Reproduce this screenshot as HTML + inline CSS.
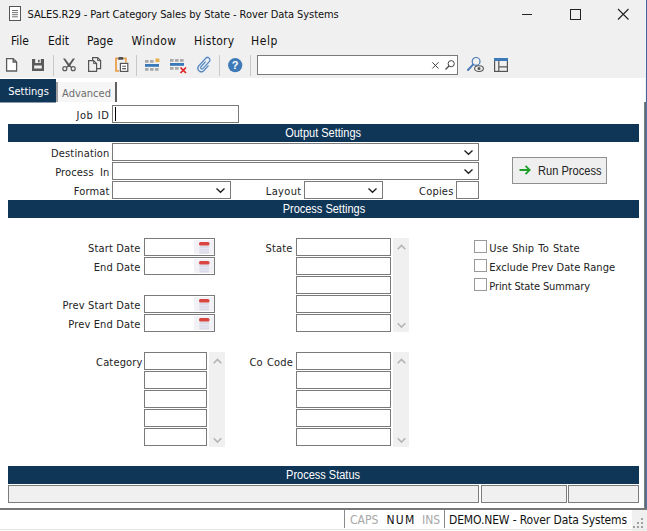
<!DOCTYPE html>
<html><head><meta charset="utf-8">
<title>SALES.R29 - Part Category Sales by State</title>
<style>
html,body{margin:0;padding:0;}
body{width:647px;height:531px;overflow:hidden;position:relative;background:#fff;font-family:"Liberation Sans",sans-serif;color:#222;}
.abs{position:absolute;}
svg{position:absolute;overflow:visible;}
.ui{font-family:"DejaVu Sans Condensed","DejaVu Sans","Liberation Sans",sans-serif;}
#chrome{left:0;top:0;width:647px;height:78px;background:#f0f0f0;}
#title{left:27.5px;top:7px;font-size:11px;line-height:16px;color:#111;white-space:nowrap;letter-spacing:-0.08px;}
.menu{top:33px;font-size:12px;line-height:16px;color:#111;white-space:nowrap;}
.bar{left:8px;width:631px;height:18px;background:#0f3557;color:#fff;font-size:12.5px;text-align:center;line-height:19px;white-space:nowrap;}
.bar span{display:inline-block;transform:scaleX(0.88);}
.lbl{font-family:"DejaVu Sans Condensed","DejaVu Sans","Liberation Sans",sans-serif;font-size:11px;line-height:18px;height:18px;color:#222;white-space:nowrap;text-align:right;letter-spacing:0.15px;margin-top:1px;margin-left:0.5px;}
.inp{box-sizing:border-box;border:1px solid #7a7a7a;background:#fff;height:18px;}
.sb{background:#f0f0f0;width:16px;}
.chk{box-sizing:border-box;width:13px;height:13px;border:1px solid #9a9a9a;background:#fff;}
.cl{font-family:"DejaVu Sans Condensed","DejaVu Sans","Liberation Sans",sans-serif;font-size:11px;line-height:14px;color:#222;white-space:nowrap;left:489.3px;margin-top:1px;}
.sbox{box-sizing:border-box;border:1px solid #7c7c7c;background:#f0f0f0;height:18px;top:485px;}
.sep{width:1px;background:#c9c9c9;top:55px;height:21px;}
.st{top:511px;font-size:12px;line-height:18px;white-space:nowrap;}
</style></head><body>
<div id="chrome" class="abs"></div>

<!-- title bar -->
<svg style="left:9px;top:6px" width="13" height="16" viewBox="0 0 13 16"><rect x="0.5" y="0.5" width="11" height="14" fill="#fff" stroke="#555" stroke-width="1"/><path d="M3 4.5h6M3 6.6h6M3 8.7h6M3 10.8h6" stroke="#666" stroke-width="0.9" fill="none"/></svg>
<div id="title" class="abs ui">SALES.R29 - Part Category Sales by State - Rover Data Systems</div>
<svg style="left:521px;top:8px" width="110" height="13" viewBox="0 0 110 13"><path d="M1 6.5h10" stroke="#222" stroke-width="1" fill="none"/><rect x="49.5" y="1.5" width="10" height="10" fill="none" stroke="#222" stroke-width="1"/><path d="M97 1l10.5 10.5M107.5 1L97 11.5" stroke="#222" stroke-width="1.1" fill="none"/></svg>

<!-- menu -->
<div class="abs menu ui" style="left:11px">File</div>
<div class="abs menu ui" style="left:48px">Edit</div>
<div class="abs menu ui" style="left:87px">Page</div>
<div class="abs menu ui" style="left:131.5px;letter-spacing:0.4px">Window</div>
<div class="abs menu ui" style="left:194px;letter-spacing:0.3px">History</div>
<div class="abs menu ui" style="left:251px;letter-spacing:0.6px">Help</div>

<!-- toolbar -->
<svg style="left:6px;top:58px" width="12" height="14" viewBox="0 0 12 14"><path d="M0.6 0.6h6.6l3.4 3.4v9H0.6z" fill="#fff" stroke="#5c5c5c" stroke-width="1.3"/><path d="M7.2 0.6v3.4h3.4" fill="none" stroke="#5c5c5c" stroke-width="1.400"/></svg>
<svg style="left:32px;top:59px" width="12" height="12" viewBox="0 0 12 12"><rect x="0" y="0" width="12" height="12" fill="#5a5a5a"/><rect x="3.2" y="0" width="5.6" height="4" fill="#f0f0f0"/><rect x="6" y="0.8" width="1.6" height="2.6" fill="#5a5a5a"/><rect x="2.2" y="6.5" width="7.6" height="3" fill="#f0f0f0"/></svg>
<div class="abs sep" style="left:53px"></div>
<svg style="left:62px;top:58px" width="14" height="14" viewBox="0 0 14 14"><path d="M1 0.400L3.100 0.600 8.300 7.600 10 9 9 9.800 6.200 8.200z" fill="#5a5a5a"/><path d="M13 0.400L10.900 0.600 5.700 7.600 4 9 5 9.800 7.800 8.200z" fill="#5a5a5a"/><circle cx="2.800" cy="10.700" r="2" fill="none" stroke="#5a5a5a" stroke-width="1.200"/><circle cx="11.200" cy="10.700" r="2" fill="none" stroke="#5a5a5a" stroke-width="1.200"/></svg>
<svg style="left:88px;top:57px" width="14" height="15" viewBox="0 0 14 15"><path d="M4.6 0.6h5l3 3v8h-8z" fill="#f0f0f0" stroke="#555" stroke-width="1.2"/><path d="M9.6 0.6v3h3" fill="none" stroke="#555" stroke-width="1"/><path d="M0.6 3.6h5l3 3v7.8h-8z" fill="#f0f0f0" stroke="#555" stroke-width="1.2"/><path d="M5.6 3.6v3h3" fill="none" stroke="#555" stroke-width="1"/></svg>
<svg style="left:114px;top:57px" width="15" height="15" viewBox="0 0 15 15"><path d="M4.300 1.400H2V13.800H5" fill="none" stroke="#e8a04c" stroke-width="1.800"/><path d="M9.500 1.400H11.900V5.600" fill="none" stroke="#e8a04c" stroke-width="1.600"/><path d="M4.200 2.700V1.400c0-0.900 0.600-1.400 1.400-1.400h2.400c0.800 0 1.400 0.500 1.400 1.400V2.700z" fill="#505050"/><rect x="6.400" y="6.400" width="7.400" height="8" fill="#fff" stroke="#555" stroke-width="1.200"/><path d="M8.200 9.300h3.800M8.200 11.600h3.800" stroke="#555" stroke-width="1.100" fill="none"/></svg>
<div class="abs sep" style="left:136px"></div>
<svg style="left:145px;top:58px" width="15" height="13" viewBox="0 0 15 13"><rect x="0" y="2" width="3.600" height="2.800" fill="#aaa"/><rect x="5" y="2" width="3.600" height="2.800" fill="#aaa"/><rect x="10.400" y="0.500" width="4" height="3.600" fill="#e8b04c"/><rect x="0" y="6" width="14" height="2.800" fill="#3a78b8"/><rect x="0" y="10" width="3.600" height="2.800" fill="#aaa"/><rect x="5" y="10" width="3.600" height="2.800" fill="#aaa"/><rect x="10" y="10" width="3.600" height="2.800" fill="#aaa"/></svg>
<svg style="left:170px;top:58px" width="17" height="15" viewBox="0 0 17 15"><rect x="0" y="1" width="3.600" height="2.800" fill="#aaa"/><rect x="5" y="1" width="3.600" height="2.800" fill="#aaa"/><rect x="10" y="1" width="3.600" height="2.800" fill="#aaa"/><rect x="0" y="5" width="14" height="2.800" fill="#3a78b8"/><rect x="0" y="9" width="3.600" height="2.800" fill="#aaa"/><rect x="5" y="9" width="3.600" height="2.800" fill="#aaa"/><path d="M10.500 9.500l5.500 5.500M16 9.500l-5.500 5.500" stroke="#e02020" stroke-width="1.700" fill="none"/></svg>
<svg style="left:0;top:0" width="647" height="80" viewBox="0 0 647 80"><g transform="translate(204.600 64.600) rotate(42) scale(0.98)" fill="none" stroke-linecap="round"><path d="M3.500 -1.500V5A3.500 3.500 0 0 1 -3.500 5V-5.500A2.500 2.500 0 0 1 1.500 -5.500V4A1.400 1.400 0 0 1 -1.300 4V-2.500" stroke="#d3e4f6" stroke-width="2.400"/><path d="M3.500 -1.500V5A3.500 3.500 0 0 1 -3.500 5V-5.500A2.500 2.500 0 0 1 1.500 -5.500V4A1.400 1.400 0 0 1 -1.300 4V-2.500" stroke="#4f7db3" stroke-width="1.050"/></g></svg>
<div class="abs sep" style="left:219px"></div>
<svg style="left:228px;top:57.600px" width="14.400" height="14.400" viewBox="0 0 14.400 14.400"><circle cx="7.200" cy="7.200" r="7.100" fill="#3f7ab8"/><text x="7.200" y="11.200" font-family="Liberation Sans, sans-serif" font-weight="bold" font-size="11" fill="#fff" text-anchor="middle">?</text></svg>
<div class="abs sep" style="left:250px"></div>
<div class="abs" style="left:257px;top:55px;width:201px;height:20px;box-sizing:border-box;border:1px solid #7a7a7a;background:#fff"></div>
<svg style="left:432px;top:62px" width="7" height="7" viewBox="0 0 7 7"><path d="M0.300 0.300l6.200 6.200M6.500 0.300L0.300 6.500" stroke="#444" stroke-width="1" fill="none"/></svg>
<svg style="left:445px;top:60px" width="10" height="10" viewBox="0 0 10 10"><circle cx="6.200" cy="3.700" r="3.100" fill="none" stroke="#444" stroke-width="1"/><path d="M4 6L0.500 9.500" stroke="#444" stroke-width="1.300" fill="none"/></svg>
<svg style="left:467px;top:57px" width="17" height="15" viewBox="0 0 17 15"><circle cx="9.100" cy="4.400" r="3.900" fill="#f0f0f0" stroke="#4a7ab5" stroke-width="1.200"/><path d="M6 7.600L1 13" stroke="#4a7ab5" stroke-width="2" fill="none" stroke-linecap="round"/><ellipse cx="12" cy="11.600" rx="4.400" ry="2.900" fill="#f0f0f0" stroke="#555" stroke-width="1.100"/><circle cx="12" cy="11.600" r="1.500" fill="#555"/></svg>
<svg style="left:494px;top:58px" width="14" height="14" viewBox="0 0 14 14"><rect x="0.600" y="0.600" width="12.800" height="12.800" fill="#f0f0f0" stroke="#555" stroke-width="1.200"/><rect x="0" y="0" width="14" height="3" fill="#3f7ab8"/><path d="M4.800 3v10.500M4.800 8.800h8.600" stroke="#555" stroke-width="1.200" fill="none"/></svg>

<!-- tabs -->
<div class="abs ui" style="left:0;top:79px;width:55px;padding-left:1px;height:23px;border-bottom:1px solid #8a9bad;background:#0f3557;color:#fff;font-size:11px;line-height:25px;text-align:center;">Settings</div>
<div class="abs ui" style="left:56px;top:82px;width:61px;height:20px;background:#f6f6f6;color:#6d6d6d;font-size:11px;line-height:23px;text-align:center;border-left:2px solid #a0a0a0;border-right:2px solid #606060;box-sizing:border-box">Advanced</div>

<div class="abs lbl" style="left:0;width:109px;top:106px;letter-spacing:0.6px;word-spacing:0.5px">Job ID</div>
<div class="abs inp" style="left:112px;top:105px;width:127px;height:18px"></div>
<div class="abs" style="left:115px;top:107px;width:1px;height:14px;background:#000"></div>

<div class="abs bar" style="top:124px"><span>Output Settings</span></div>
<div class="abs lbl" style="left:0;width:109px;top:144px">Destination</div>
<div class="abs inp" style="left:112px;top:143px;width:367px"></div>
<div class="abs lbl" style="left:0;width:109px;top:163px;word-spacing:3px">Process In</div>
<div class="abs inp" style="left:112px;top:162px;width:367px"></div>
<div class="abs lbl" style="left:0;width:109px;top:182px">Format</div>
<div class="abs inp" style="left:112px;top:181px;width:119px"></div>
<div class="abs lbl" style="left:200px;width:101px;top:182px;letter-spacing:0.35px">Layout</div>
<div class="abs inp" style="left:304px;top:181px;width:79px"></div>
<div class="abs lbl" style="left:352px;width:101px;top:182px;letter-spacing:0.2px">Copies</div>
<div class="abs inp" style="left:456px;top:181px;width:23px"></div>
<svg style="left:464px;top:150px" width="9" height="5" viewBox="0 0 9 5"><path d="M0.500 0.500l4 3.800 4-3.800" fill="none" stroke="#222" stroke-width="1.400"/></svg>
<svg style="left:464px;top:169px" width="9" height="5" viewBox="0 0 9 5"><path d="M0.500 0.500l4 3.800 4-3.800" fill="none" stroke="#222" stroke-width="1.400"/></svg>
<svg style="left:216px;top:188px" width="9" height="5" viewBox="0 0 9 5"><path d="M0.500 0.500l4 3.800 4-3.800" fill="none" stroke="#222" stroke-width="1.400"/></svg>
<svg style="left:368px;top:188px" width="9" height="5" viewBox="0 0 9 5"><path d="M0.500 0.500l4 3.800 4-3.800" fill="none" stroke="#222" stroke-width="1.400"/></svg>

<div class="abs" style="left:512px;top:157px;width:95px;height:27px;box-sizing:border-box;border:1px solid #8f8f8f;background:#efefef;font-size:12px;line-height:25px;white-space:nowrap"><span style="position:absolute;left:25px;top:1px;display:inline-block;transform:scaleX(0.925);transform-origin:0 50%">Run Process</span></div>
<svg style="left:519px;top:165px" width="12" height="10" viewBox="0 0 12 10"><path d="M0.500 5h10M6.500 0.800l4.200 4.200-4.200 4.200" fill="none" stroke="#1fa02a" stroke-width="1.800"/></svg>

<div class="abs bar" style="top:200px"><span>Process Settings</span></div>

<!-- dates -->
<div class="abs lbl" style="left:30px;width:110px;top:239px">Start Date</div>
<div class="abs lbl" style="left:30px;width:110px;top:258px">End Date</div>
<div class="abs lbl" style="left:30px;width:110px;top:296px">Prev Start Date</div>
<div class="abs lbl" style="left:30px;width:110px;top:315px">Prev End Date</div>
<div class="abs inp" style="left:144px;top:238px;width:71px"></div>
<div class="abs inp" style="left:144px;top:257px;width:71px"></div>
<div class="abs inp" style="left:144px;top:295px;width:71px"></div>
<div class="abs inp" style="left:144px;top:314px;width:71px"></div>
<svg style="left:194px;top:240px" width="20" height="14" viewBox="0 0 20 14" id="cal"><rect x="0" y="0" width="20" height="14" fill="#f1f1f6"/><rect x="5.500" y="5.500" width="9.500" height="8" fill="#dcdce8"/><path d="M5.500 8.500h9.500M5.500 11h9.500" stroke="#eef" stroke-width="0.600"/><rect x="5" y="2" width="10.500" height="3.600" rx="1.500" fill="#d9453f"/></svg>
<svg style="left:194px;top:259px" width="20" height="14" viewBox="0 0 20 14"><rect x="0" y="0" width="20" height="14" fill="#f1f1f6"/><rect x="5.500" y="5.500" width="9.500" height="8" fill="#dcdce8"/><path d="M5.500 8.500h9.500M5.500 11h9.500" stroke="#eef" stroke-width="0.600"/><rect x="5" y="2" width="10.500" height="3.600" rx="1.500" fill="#d9453f"/></svg>
<svg style="left:194px;top:297px" width="20" height="14" viewBox="0 0 20 14"><rect x="0" y="0" width="20" height="14" fill="#f1f1f6"/><rect x="5.500" y="5.500" width="9.500" height="8" fill="#dcdce8"/><path d="M5.500 8.500h9.500M5.500 11h9.500" stroke="#eef" stroke-width="0.600"/><rect x="5" y="2" width="10.500" height="3.600" rx="1.500" fill="#d9453f"/></svg>
<svg style="left:194px;top:316px" width="20" height="14" viewBox="0 0 20 14"><rect x="0" y="0" width="20" height="14" fill="#f1f1f6"/><rect x="5.500" y="5.500" width="9.500" height="8" fill="#dcdce8"/><path d="M5.500 8.500h9.500M5.500 11h9.500" stroke="#eef" stroke-width="0.600"/><rect x="5" y="2" width="10.500" height="3.600" rx="1.500" fill="#d9453f"/></svg>

<!-- state -->
<div class="abs lbl" style="left:192px;width:100px;top:239px">State</div>
<div class="abs inp" style="left:296px;top:238px;width:95px"></div>
<div class="abs inp" style="left:296px;top:257px;width:95px"></div>
<div class="abs inp" style="left:296px;top:276px;width:95px"></div>
<div class="abs inp" style="left:296px;top:295px;width:95px"></div>
<div class="abs inp" style="left:296px;top:314px;width:95px"></div>
<div class="abs sb" style="left:393px;top:238px;height:94px"></div>
<svg style="left:397px;top:244px" width="9" height="6" viewBox="0 0 9 6"><path d="M0.700 5.300l3.800-3.800 3.800 3.800" fill="none" stroke="#b4b4b4" stroke-width="1.600"/></svg>
<svg style="left:397px;top:322px" width="9" height="6" viewBox="0 0 9 6"><path d="M0.700 1.200l3.800 3.800 3.800-3.800" fill="none" stroke="#b4b4b4" stroke-width="1.600"/></svg>

<!-- checkboxes -->
<div class="abs chk" style="left:474px;top:240px"></div>
<div class="abs chk" style="left:474px;top:259px"></div>
<div class="abs chk" style="left:474px;top:278px"></div>
<div class="abs cl" style="top:241px;letter-spacing:0.1px;word-spacing:0.9px">Use Ship To State</div>
<div class="abs cl" style="top:260px;letter-spacing:0.05px">Exclude Prev Date Range</div>
<div class="abs cl" style="top:279px;letter-spacing:-0.13px">Print State Summary</div>

<!-- category -->
<div class="abs lbl" style="left:42px;width:100px;top:353px">Category</div>
<div class="abs inp" style="left:144px;top:352px;width:63px"></div>
<div class="abs inp" style="left:144px;top:371px;width:63px"></div>
<div class="abs inp" style="left:144px;top:390px;width:63px"></div>
<div class="abs inp" style="left:144px;top:409px;width:63px"></div>
<div class="abs inp" style="left:144px;top:428px;width:63px"></div>
<div class="abs sb" style="left:209px;top:352px;height:95px"></div>
<svg style="left:213px;top:358px" width="9" height="6" viewBox="0 0 9 6"><path d="M0.700 5.300l3.800-3.800 3.800 3.800" fill="none" stroke="#b4b4b4" stroke-width="1.600"/></svg>
<svg style="left:213px;top:437px" width="9" height="6" viewBox="0 0 9 6"><path d="M0.700 1.200l3.800 3.800 3.800-3.800" fill="none" stroke="#b4b4b4" stroke-width="1.600"/></svg>

<!-- co code -->
<div class="abs lbl" style="left:192px;width:100.500px;top:353px;word-spacing:1px">Co Code</div>
<div class="abs inp" style="left:296px;top:352px;width:95px"></div>
<div class="abs inp" style="left:296px;top:371px;width:95px"></div>
<div class="abs inp" style="left:296px;top:390px;width:95px"></div>
<div class="abs inp" style="left:296px;top:409px;width:95px"></div>
<div class="abs inp" style="left:296px;top:428px;width:95px"></div>
<div class="abs sb" style="left:393px;top:352px;height:95px"></div>
<svg style="left:397px;top:358px" width="9" height="6" viewBox="0 0 9 6"><path d="M0.700 5.300l3.800-3.800 3.800 3.800" fill="none" stroke="#b4b4b4" stroke-width="1.600"/></svg>
<svg style="left:397px;top:437px" width="9" height="6" viewBox="0 0 9 6"><path d="M0.700 1.200l3.800 3.800 3.800-3.800" fill="none" stroke="#b4b4b4" stroke-width="1.600"/></svg>

<!-- status -->
<div class="abs bar" style="top:466px"><span>Process Status</span></div>
<div class="abs sbox" style="left:8px;width:471px"></div>
<div class="abs sbox" style="left:481px;width:86px"></div>
<div class="abs sbox" style="left:568px;width:71px"></div>

<!-- window edges -->
<div class="abs" style="left:644px;top:102px;width:3px;height:408px;background:linear-gradient(90deg,#74827f 0,#74827f 1px,#5a6b80 1px,#5a6b80 2px,#55709b 2px)"></div>
<div class="abs" style="left:645px;top:0;width:1px;height:102px;background:#e8f6fd"></div><div class="abs" style="left:646px;top:0;width:1px;height:102px;background:#45629c"></div>
<div class="abs" style="left:0;top:508px;width:647px;height:2px;background:#777"></div>

<!-- status bar -->
<div class="abs" style="left:0;top:510px;width:647px;height:21px;background:#fff"></div>
<div class="abs" style="left:632px;top:510px;width:15px;height:21px;background:#f0f0f0"></div>
<div class="abs" style="left:0;top:529px;width:647px;height:1px;background:#e8e8e8"></div>
<div class="abs" style="left:344px;top:510px;width:1px;height:18px;background:#8a8a8a"></div>
<div class="abs" style="left:444px;top:510px;width:1px;height:18px;background:#8a8a8a"></div>
<div class="abs st ui" style="left:350px;color:#a8a8a8">CAPS</div>
<div class="abs st ui" style="left:386.5px;color:#111;letter-spacing:1.2px">NUM</div>
<div class="abs st ui" style="left:422px;color:#a8a8a8">INS</div>
<div class="abs st ui" style="left:449px;color:#111;letter-spacing:-0.13px">DEMO.NEW - Rover Data Systems</div>
<svg style="left:633px;top:518px" width="11" height="11" viewBox="0 0 11 11"><g fill="#a0a0a0"><rect x="8" y="0" width="2" height="2"/><rect x="4" y="4" width="2" height="2"/><rect x="8" y="4" width="2" height="2"/><rect x="0" y="8" width="2" height="2"/><rect x="4" y="8" width="2" height="2"/><rect x="8" y="8" width="2" height="2"/></g></svg>
</body></html>
